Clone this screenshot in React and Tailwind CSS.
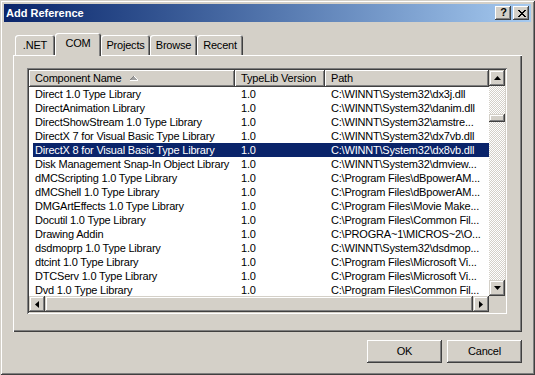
import React from "react";

const rows = [
  ["Direct 1.0 Type Library", "1.0", "C:\\WINNT\\System32\\dx3j.dll"],
  ["DirectAnimation Library", "1.0", "C:\\WINNT\\System32\\danim.dll"],
  ["DirectShowStream 1.0 Type Library", "1.0", "C:\\WINNT\\System32\\amstre..."],
  ["DirectX 7 for Visual Basic Type Library", "1.0", "C:\\WINNT\\System32\\dx7vb.dll"],
  ["DirectX 8 for Visual Basic Type Library", "1.0", "C:\\WINNT\\System32\\dx8vb.dll"],
  ["Disk Management Snap-In Object Library", "1.0", "C:\\WINNT\\System32\\dmview..."],
  ["dMCScripting 1.0 Type Library", "1.0", "C:\\Program Files\\dBpowerAM..."],
  ["dMCShell 1.0 Type Library", "1.0", "C:\\Program Files\\dBpowerAM..."],
  ["DMGArtEffects 1.0 Type Library", "1.0", "C:\\Program Files\\Movie Make..."],
  ["Docutil 1.0 Type Library", "1.0", "C:\\Program Files\\Common Fil..."],
  ["Drawing Addin", "1.0", "C:\\PROGRA~1\\MICROS~2\\O..."],
  ["dsdmoprp 1.0 Type Library", "1.0", "C:\\WINNT\\System32\\dsdmop..."],
  ["dtcint 1.0 Type Library", "1.0", "C:\\Program Files\\Microsoft Vi..."],
  ["DTCServ 1.0 Type Library", "1.0", "C:\\Program Files\\Microsoft Vi..."],
  ["Dvd 1.0 Type Library", "1.0", "C:\\Program Files\\Common Fil..."],
];

const raised =
  "bg-[#d4d0c8] shadow-[inset_-1px_-1px_#404040,inset_1px_1px_#ffffff,inset_-2px_-2px_#808080]";
const sbBtn =
  "bg-[#d4d0c8] shadow-[inset_-1px_-1px_#404040,inset_1px_1px_#d4d0c8,inset_-2px_-2px_#808080,inset_2px_2px_#ffffff]";
const tabShadow =
  "shadow-[inset_1px_1px_#ffffff,inset_-1px_0_#404040,inset_-2px_0_#808080]";

function Tri({ dir }) {
  const pts = {
    up: "3.5,0 7,4 0,4",
    down: "0,0 7,0 3.5,4",
    left: "4,0 4,7 0,3.5",
    right: "0,0 0,7 4,3.5",
  }[dir];
  const w = dir === "up" || dir === "down" ? 7 : 4;
  const h = dir === "up" || dir === "down" ? 4 : 7;
  return (
    <svg width={w} height={h} viewBox={`0 0 ${w} ${h}`}>
      <polygon points={pts} fill="#000" />
    </svg>
  );
}

function Tab({ label, w, selected }) {
  if (selected) {
    return (
      <div
        className={`relative z-10 -mb-px flex h-[23px] items-center justify-center rounded-t-[3px] bg-[#d4d0c8] pb-[3px] ${tabShadow}`}
        style={{ width: w }}
      >
        {label}
      </div>
    );
  }
  return (
    <div
      className={`flex h-[20px] items-center justify-center rounded-t-[3px] bg-[#d4d0c8] ${tabShadow}`}
      style={{ width: w }}
    >
      {label}
    </div>
  );
}

export default function App() {
  return (
    <div className="h-[375px] w-[535px] bg-[#d4d0c8] p-[4px] font-['Liberation_Sans',Arial,sans-serif] text-[11px] tracking-[-0.2px] text-black shadow-[inset_1px_1px_#d4d0c8,inset_-1px_-1px_#404040,inset_2px_2px_#ffffff,inset_-2px_-2px_#808080]">
      {/* Title bar */}
      <div className="flex h-[18px] items-center justify-between bg-linear-to-r from-[#0a246a] to-[#a6caf0] pl-[2px] pr-[2px]">
        <span className="font-bold tracking-normal text-white">Add Reference</span>
        <div className="flex gap-[2px]">
          <div className={`flex h-[14px] w-[16px] items-center justify-center pb-px pl-px text-[11px] font-bold leading-none ${raised}`}>
            ?
          </div>
          <div className={`flex h-[14px] w-[16px] items-center justify-center pl-px ${raised}`}>
            <svg width="8" height="7" viewBox="0 0 8 7" shapeRendering="crispEdges">
              <path
                d="M0 0h2v1h-2zM6 0h2v1h-2zM1 1h2v1h-2zM5 1h2v1h-2zM2 2h4v1h-4zM3 3h2v1h-2zM2 4h4v1h-4zM1 5h2v1h-2zM5 5h2v1h-2zM0 6h2v1h-2zM6 6h2v1h-2z"
                fill="#000"
              />
            </svg>
          </div>
        </div>
      </div>

      {/* Tabs */}
      <div className="mt-[11px] flex h-[22px] items-end pl-[11px]">
        <Tab label=".NET" w={40} />
        <Tab label="COM" w={46} selected />
        <Tab label="Projects" w={49} />
        <Tab label="Browse" w={47} />
        <Tab label="Recent" w={46} />
      </div>

      {/* Panel */}
      <div className="ml-[9px] h-[277px] w-[509px] pl-[14px] pt-[13px] shadow-[inset_1px_1px_#ffffff,inset_-1px_-1px_#404040,inset_-2px_-2px_#808080]">
        <div className="w-[480px] bg-white p-[2px] shadow-[inset_1px_1px_#808080,inset_-1px_-1px_#ffffff,inset_2px_2px_#404040,inset_-2px_-2px_#d4d0c8]">
          <div className="flex">
            <div className="w-[460px]">
              {/* Header */}
              <div className="flex h-[17px]">
                <div className={`flex w-[206px] items-center pl-[6px] ${raised}`}>
                  <span>Component Name</span>
                  <svg className="ml-[9px]" width="8" height="5" viewBox="0 0 8 5" shapeRendering="crispEdges">
                    <path d="M3 0h1v1h-1zM2 1h1v1h-1zM1 2h1v1h-1zM0 3h1v1h-1z" fill="#808080" />
                    <path d="M4 0h1v1h-1zM5 1h1v1h-1zM6 2h1v1h-1zM7 3h1v1h-1zM0 4h8v1h-8z" fill="#ffffff" />
                    <path d="M3 1h2v1h-2zM2 2h4v1h-4zM1 3h6v1h-6z" fill="#a0a0a0" />
                  </svg>
                </div>
                <div className={`flex w-[90px] items-center pl-[6px] ${raised}`}>TypeLib Version</div>
                <div className={`flex w-[164px] items-center pl-[6px] ${raised}`}>Path</div>
              </div>
              {/* Rows */}
              <div className="h-[209px] overflow-hidden">
                {rows.map((r, i) => {
                  const sel = i === 4;
                  return (
                    <div key={i} className="flex h-[14px] pl-[4px] leading-[14px]">
                      <div className={`flex ${sel ? "bg-[#0a246a] text-white" : ""}`}>
                        <div className="w-[202px] overflow-hidden whitespace-nowrap pl-[2px]">{r[0]}</div>
                        <div className="w-[90px] overflow-hidden whitespace-nowrap pl-[6px]">{r[1]}</div>
                        <div className="w-[164px] overflow-hidden whitespace-nowrap pl-[6px]">{r[2]}</div>
                      </div>
                    </div>
                  );
                })}
              </div>
            </div>
            {/* Vertical scrollbar */}
            <div className="flex h-[226px] w-[16px] flex-col">
              <div className={`flex h-[16px] items-center justify-center ${sbBtn}`}>
                <Tri dir="up" />
              </div>
              <div className="flex-1 bg-[conic-gradient(#ffffff_25%,#d4d0c8_0_50%,#ffffff_0_75%,#d4d0c8_0)] bg-[length:2px_2px] pt-[28px]">
                <div className={`h-[8px] ${sbBtn}`} />
              </div>
              <div className={`flex h-[16px] items-center justify-center ${sbBtn}`}>
                <Tri dir="down" />
              </div>
            </div>
          </div>
          {/* Horizontal scrollbar */}
          <div className="flex h-[16px]">
            <div className={`flex w-[16px] items-center justify-center ${sbBtn}`}>
              <Tri dir="left" />
            </div>
            <div className={`w-[428px] ${sbBtn}`} />
            <div className={`flex w-[16px] items-center justify-center ${sbBtn}`}>
              <Tri dir="right" />
            </div>
            <div className="w-[16px] bg-[#d4d0c8]" />
          </div>
        </div>
      </div>

      {/* Buttons */}
      <div className="mt-[8px] flex justify-end gap-[5px] pr-[9px]">
        <div className={`flex h-[23px] w-[75px] items-center justify-center ${raised}`}>OK</div>
        <div className={`flex h-[23px] w-[75px] items-center justify-center ${raised}`}>Cancel</div>
      </div>
    </div>
  );
}
